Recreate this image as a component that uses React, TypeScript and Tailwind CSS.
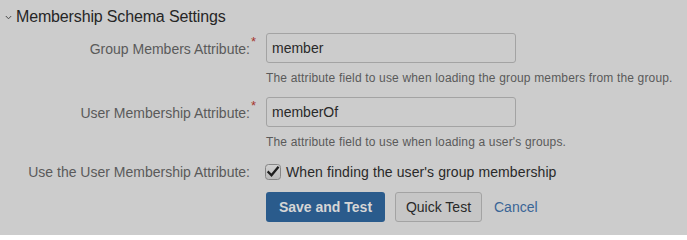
import React from "react";

function Req() {
  return (
    <span className="absolute left-full top-[-4px] ml-[1px] text-[13px] leading-none text-[#a6362c]">*</span>
  );
}

function Label({ text, required }: { text: string; required?: boolean }) {
  return (
    <div className="w-[250px] shrink-0 flex items-center justify-end h-[30px] text-[14px] text-[#5a5a5a] pt-[2px]">
      <span className="relative">
        {text}
        {required && <Req />}
      </span>
    </div>
  );
}

function TextField({ value }: { value: string }) {
  return (
    <div className="w-[250px] h-[30px] border border-[#a3a3a3] rounded-[3px] bg-[#cccccc] px-[5px] flex items-center text-[14px] text-[#292929]">
      {value}
    </div>
  );
}

export default function App() {
  return (
    <div className="w-[687px] h-[235px] bg-[#cccccc] overflow-hidden font-['Liberation_Sans',Arial,sans-serif]">
      <div className="pt-[7px] pl-[5px] flex items-center h-[27px]">
        <svg width="7" height="5" viewBox="0 0 7 5" className="mr-[4px] mt-[1px]">
          <path d="M0.8 1 L3.5 3.8 L6.2 1" fill="none" stroke="#4a4a4a" strokeWidth="1" />
        </svg>
        <span className="text-[16px] leading-[20px] text-[#262626] tracking-[-0.15px]">Membership Schema Settings</span>
      </div>

      <div className="mt-[6px] flex">
        <Label text="Group Members Attribute:" required />
        <div className="ml-[16px]">
          <TextField value="member" />
          <div className="mt-[7px] text-[12px] leading-[16px] text-[#5a5a5a] whitespace-nowrap tracking-[0.16px]">
            The attribute field to use when loading the group members from the group.
          </div>
        </div>
      </div>

      <div className="mt-[11px] flex">
        <Label text="User Membership Attribute:" required />
        <div className="ml-[16px]">
          <TextField value="memberOf" />
          <div className="mt-[7px] text-[12px] leading-[16px] text-[#5a5a5a] whitespace-nowrap tracking-[0.16px]">
            The attribute field to use when loading a user's groups.
          </div>
        </div>
      </div>

      <div className="mt-[12px] flex items-center h-[20px]">
        <div className="w-[250px] shrink-0 text-right text-[14px] text-[#5a5a5a]">
          Use the User Membership Attribute:
        </div>
        <div className="ml-[15px] flex items-center">
          <svg width="16" height="16" viewBox="0 0 16 16">
            <defs>
              <linearGradient id="cb" x1="0" y1="0" x2="0" y2="1">
                <stop offset="0" stopColor="#d2d2d2" />
                <stop offset="1" stopColor="#b9b9b9" />
              </linearGradient>
            </defs>
            <rect x="0.5" y="0.5" width="15" height="15" rx="3" fill="url(#cb)" stroke="#858585" />
            <path d="M3.5 8.2 L6.5 11.2 L12.8 3.6" fill="none" stroke="#1e1e1e" strokeWidth="2.3" strokeLinecap="square" />
          </svg>
          <span className="ml-[5px] text-[14px] text-[#292929] tracking-[0.1px]">When finding the user's group membership</span>
        </div>
      </div>

      <div className="mt-[10px] flex items-center">
        <div className="w-[250px] shrink-0" />
        <div className="ml-[16px] flex items-center">
          <button className="w-[119px] h-[30px] rounded-[3px] bg-[#2a5b8c] text-[#d6d6d6] text-[14px] font-bold">
            Save and Test
          </button>
          <button className="ml-[10px] w-[87px] h-[30px] rounded-[3px] border border-[#a3a3a3] bg-[#c6c6c6] text-[#292929] text-[14px]">
            Quick Test
          </button>
          <span className="ml-[12px] text-[14px] text-[#3a6596]">Cancel</span>
        </div>
      </div>
    </div>
  );
}
